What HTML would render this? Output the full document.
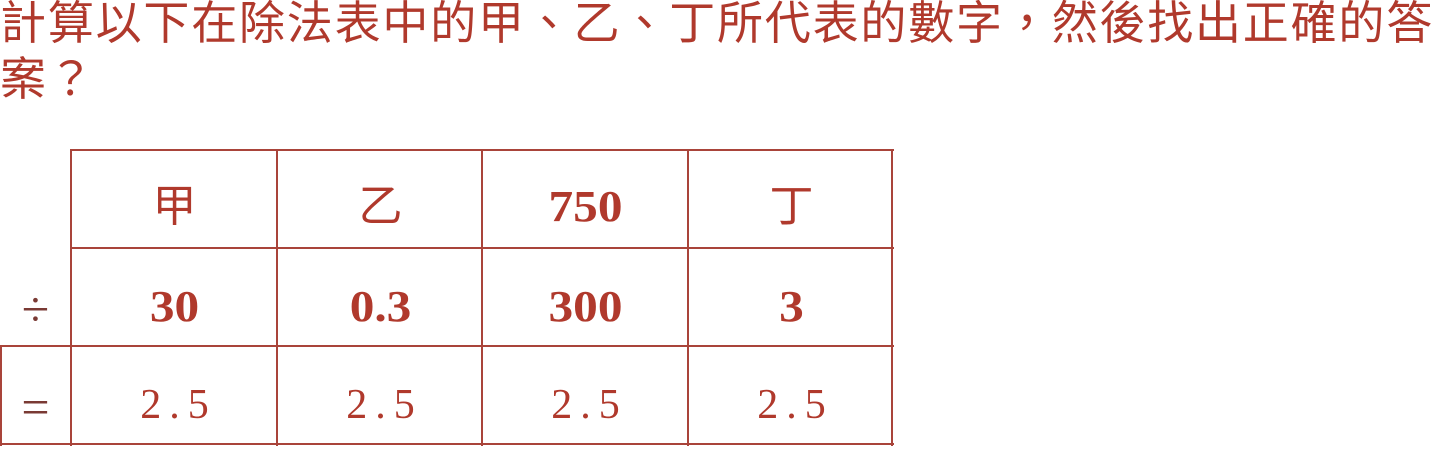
<!DOCTYPE html>
<html><head><meta charset="utf-8"><style>
body{margin:0;width:1435px;height:446px;background:#fff;overflow:hidden;position:relative;color:#b0392c;}
.t{position:absolute;left:0;top:-5px;width:1440px;font-family:"Liberation Sans","Noto Sans CJK TC",sans-serif;font-size:46px;line-height:56px;white-space:nowrap;letter-spacing:1.8px}
.h{position:absolute;background:#a9443a}
.c{position:absolute;width:205px;text-align:center;height:98px;line-height:98px}
.cj{font-family:"Liberation Sans","Noto Sans CJK TC",sans-serif;font-size:44px}
.b{font-family:"Liberation Serif",serif;font-weight:bold;font-size:44px;transform:scaleX(1.12)}
.r{font-family:"Liberation Serif",serif;font-size:42px;letter-spacing:8px;text-indent:8px}
.s{position:absolute;width:71px;text-align:center;height:98px;line-height:98px;font-family:"Liberation Serif",serif;font-size:50px;color:#7a3a34}
</style></head><body>
<div class="t">計算以下在除法表中的甲、乙、丁所代表的數字，然後找出正確的答<br>案？</div>
<div class="h" style="left:70px;top:149px;width:824px;height:2px"></div>
<div class="h" style="left:70px;top:247px;width:824px;height:2px"></div>
<div class="h" style="left:0;top:345px;width:894px;height:2px"></div>
<div class="h" style="left:0;top:443px;width:894px;height:2px"></div>
<div class="h" style="left:70px;top:149px;width:2px;height:297px"></div>
<div class="h" style="left:276px;top:149px;width:2px;height:297px"></div>
<div class="h" style="left:481px;top:149px;width:2px;height:297px"></div>
<div class="h" style="left:687px;top:149px;width:2px;height:297px"></div>
<div class="h" style="left:891px;top:149px;width:2px;height:297px"></div>
<div class="h" style="left:0;top:345px;width:2px;height:101px"></div>
<div class="c cj" style="left:72px;top:158px">甲</div>
<div class="c cj" style="left:278px;top:158px">乙</div>
<div class="c b" style="left:483px;top:158px">750</div>
<div class="c cj" style="left:689px;top:158px">丁</div>
<div class="s" style="left:0;top:260px">÷</div>
<div class="c b" style="left:72px;top:258px">30</div>
<div class="c b" style="left:278px;top:258px">0.3</div>
<div class="c b" style="left:483px;top:258px">300</div>
<div class="c b" style="left:689px;top:258px">3</div>
<div class="s" style="left:0;top:358px">=</div>
<div class="c r" style="left:72px;top:356px">2.5</div>
<div class="c r" style="left:278px;top:356px">2.5</div>
<div class="c r" style="left:483px;top:356px">2.5</div>
<div class="c r" style="left:689px;top:356px">2.5</div>
</body></html>
